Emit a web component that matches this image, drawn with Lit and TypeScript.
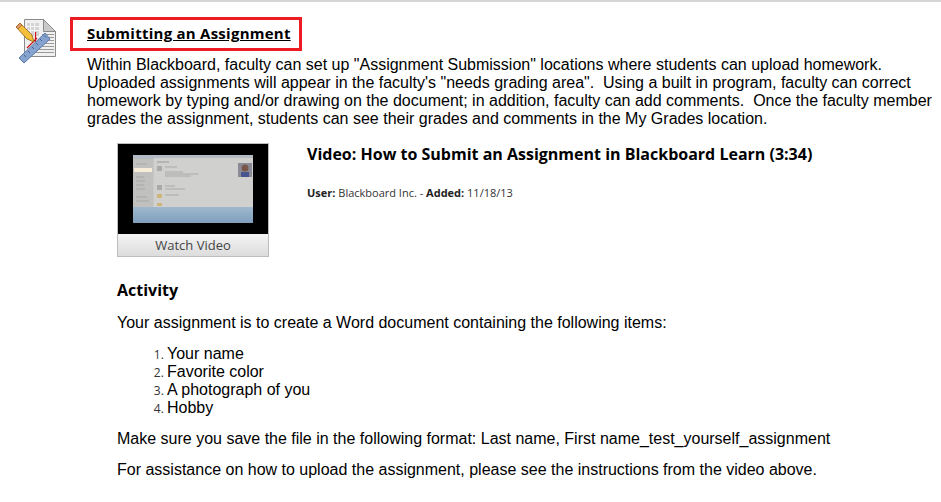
import { LitElement, html, css } from "lit";
import { customElement } from "lit/decorators.js";

@customElement("app-root")
export class AppRoot extends LitElement {
  static styles = css`
    :host { display: block; height: 502px; overflow: hidden; background: #fff; color: #000; border-top: 2px solid #d6d6d6; box-sizing: border-box;
      font-family: "Liberation Sans", Arial, sans-serif; font-size: 16px; line-height: 18px; }
    .page { display: grid; grid-template-columns: 70px 1fr; }
    .icon { grid-row: span 2; padding: 16px 0 0 15px; }
    .icon svg { display: block; }
    .heading-box { justify-self: start; width: 232px; height: 34px; box-sizing: border-box; border: 3px solid #ed1c24; margin-top: 15px; padding: 2px 0 0 14px;
      font-family: "Open Sans", sans-serif; font-weight: 700; font-size: 15px; line-height: 22px; color: #000; text-decoration: underline; white-space: nowrap; letter-spacing: .25px; }
    .body { padding-left: 17px; }
    .intro { margin: 5px 0 0; width: 850px; }
    .video { display: flex; gap: 38px; margin: 15px 0 0 30px; }
    .thumb { width: 152px; height: 114px; box-sizing: border-box; border: 1px solid #bdbdbd; display: flex; flex-direction: column; }
    .shot { flex: 0 0 90px; background: #000; position: relative; padding: 11px 0 0 15px; box-sizing: border-box; }
    .shot svg { display: block; }
    .watch { flex: 1; background: linear-gradient(#f4f4f4, #dcdcdc); text-align: center; font-family: "Open Sans", sans-serif; font-size: 13px; line-height: 22px; color: #444; }
    .info h3 { margin: 0; font-family: "Open Sans", sans-serif; font-size: 16px; line-height: 22px; font-weight: 700; }
    .meta { margin: 20px 0 0; font-family: "Open Sans", sans-serif; font-size: 11px; line-height: 15px; color: #333; }
    .meta b { color: #222; }
    .activity { margin: 22px 0 0 30px; }
    .activity h4 { margin: 0; font-family: "Open Sans", sans-serif; font-size: 16px; line-height: 22px; font-weight: 700; }
    .activity p { margin: 13px 0 0; }
    ol { margin: 13px 0 0; padding: 0 0 0 50px; }
    ol li::marker { font-family: "Open Sans", sans-serif; font-size: 12px; color: #333; }
    .activity p.after { margin-top: 13px; }
  `;

  render() {
    return html`
      <div class="page">
        <div class="icon">
          <svg width="42" height="46" viewBox="0 0 42 46">
            <path d="M9.5 1.5H28.5L40.5 13.5V38.5H9.5Z" fill="#f0f0f0" stroke="#8a8a8a"/>
            <path d="M28.5 1.5V13.5H40.5Z" fill="#c9c9c9" stroke="#8a8a8a"/>
            <rect x="12" y="5" width="12" height="13" fill="#d4d4d4"/>
            <path d="M12 8.5H24M12 12.5H24M15.500 5V18M19.500 5V18" stroke="#f5f5f5"/>
            <path d="M27 16.5H39M27 19.5H39M30 22.5H39M28 25.5H39M25 28.5H39M22 31.5H39M18 34.5H39" stroke="#9a9a9a"/>
            <path d="M20.500 14V24M12 30L22 20" stroke="#d0121b" stroke-width="1.2"/>
            <path d="M1 9L5 5 17 17 19 24 12 21Z" fill="#f4bf3a" stroke="#8c5f14" stroke-width=".8"/>
            <path d="M1 9L5 5 7 7 3 11Z" fill="#e8926a" stroke="#8c5f14" stroke-width=".6"/>
            <path d="M4 40L30 15 35 21 9 45Z" fill="#86a3cf" stroke="#5a79a8"/>
            <path d="M9 37L11 39M13 33L15 35M17 29L19 31M21 25L23 27M25 21L27 23M29 17.500L31 19.500" stroke="#44618f"/>
          </svg>
        </div>
        <div class="heading-box">Submitting an Assignment</div>
        <div class="body">
          <p class="intro">Within Blackboard, faculty can set up "Assignment Submission" locations where students can upload homework. Uploaded assignments will appear in the faculty's "needs grading area".&nbsp; Using a built in program, faculty can correct homework by typing and/or drawing on the document; in addition, faculty can add comments.&nbsp; Once the faculty member grades the assignment, students can see their grades and comments in the My Grades location.</p>
          <div class="video">
            <div class="thumb">
              <div class="shot">
                <svg width="120" height="68" viewBox="0 0 120 68">
                  <defs>
                    <filter id="b"><feGaussianBlur stdDeviation=".6"/></filter>
                    <linearGradient id="w" x1="0" y1="0" x2="0" y2="1"><stop offset="0" stop-color="#9fb8ce"/><stop offset="1" stop-color="#7f9fbd"/></linearGradient>
                  </defs>
                  <rect width="120" height="68" fill="#c8c8c6"/>
                  <g filter="url(#b)">
                    <rect width="120" height="4" fill="#b3bcc4"/>
                    <rect x="0" y="4" width="20" height="48" fill="#c0c0be"/>
                    <rect x="1" y="13" width="18" height="4" fill="#f6ecd9"/>
                    <path d="M3 9H14M3 22H11M3 26H12M3 30H11M3 34H12M3 42H14M3 46H16" stroke="#a8a8a6"/>
                    <rect x="21" y="3" width="99" height="49" fill="#d0d0ce"/>
                    <path d="M24 7H36" stroke="#999"/>
                    <rect x="24" y="11" width="5" height="5" fill="#aaa"/>
                    <path d="M32 12H44M32 17H50M32 19H65M32 21H58" stroke="#aaa"/>
                    <rect x="105" y="8" width="14" height="14" fill="#8a8b96"/>
                    <circle cx="112" cy="13" r="3.500" fill="#7a5548"/>
                    <rect x="108" y="17" width="8" height="5" fill="#47558f"/>
                    <rect x="24" y="30" width="5" height="5" fill="#aaa"/>
                    <path d="M32 31H42M32 34H52" stroke="#aaa"/>
                    <rect x="24" y="39" width="5" height="4" fill="#cdb678"/>
                    <path d="M32 40H46" stroke="#aaa"/>
                    <rect x="24" y="48" width="5" height="3" fill="#cdb678"/>
                    <rect y="52" width="120" height="16" fill="url(#w)"/>
                  </g>
                </svg>
              </div>
              <div class="watch">Watch Video</div>
            </div>
            <div class="info">
              <h3>Video: How to Submit an Assignment in Blackboard Learn (3:34)</h3>
              <p class="meta"><b>User:</b> Blackboard Inc. - <b>Added:</b> 11/18/13</p>
            </div>
          </div>
          <div class="activity">
            <h4>Activity</h4>
            <p>Your assignment is to create a Word document containing the following items:</p>
            <ol>
              <li>Your name</li>
              <li>Favorite color</li>
              <li>A photograph of you</li>
              <li>Hobby</li>
            </ol>
            <p class="after">Make sure you save the file in the following format: Last name, First name_test_yourself_assignment</p>
            <p class="after">For assistance on how to upload the assignment, please see the instructions from the video above.</p>
          </div>
        </div>
      </div>
    `;
  }
}
